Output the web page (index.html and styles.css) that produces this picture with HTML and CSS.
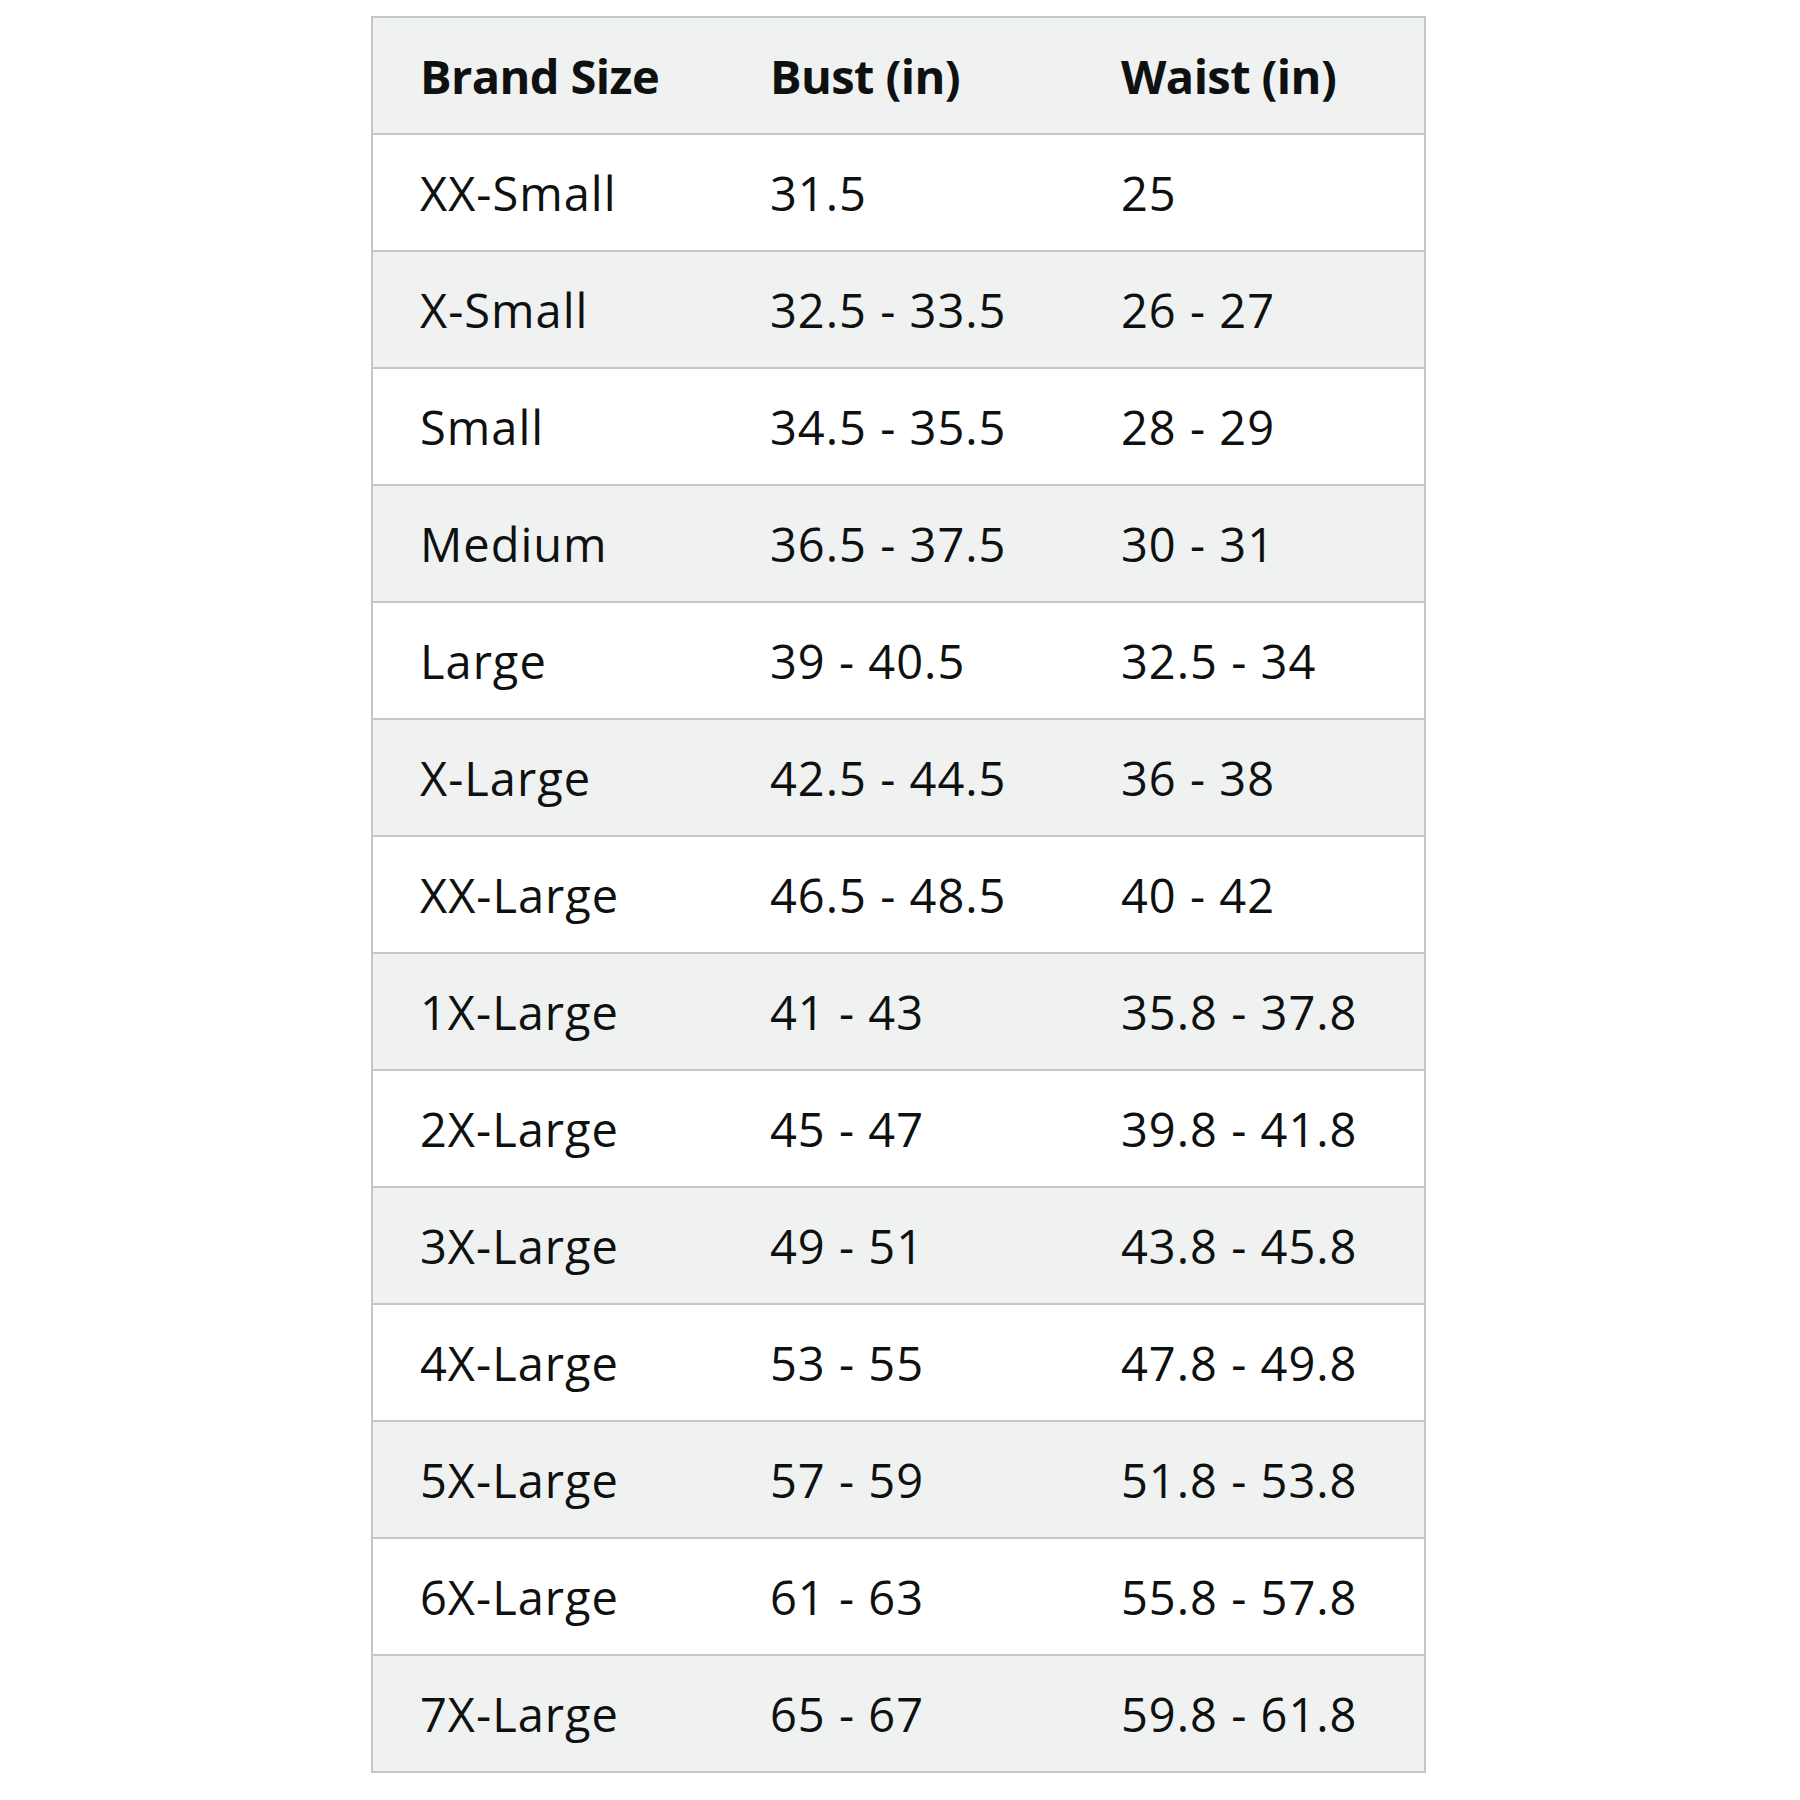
FILE: index.html
```html
<!DOCTYPE html>
<html>
<head>
<meta charset="utf-8">
<link rel="stylesheet" href="styles.css">
</head>
<body>
<div class="page">
<table class="chart">
<thead>
<tr><th>Brand Size</th><th>Bust (in)</th><th>Waist (in)</th></tr>
</thead>
<tbody>
<tr><td>XX-Small</td><td>31.5</td><td>25</td></tr>
<tr><td>X-Small</td><td>32.5 - 33.5</td><td>26 - 27</td></tr>
<tr><td>Small</td><td>34.5 - 35.5</td><td>28 - 29</td></tr>
<tr><td>Medium</td><td>36.5 - 37.5</td><td>30 - 31</td></tr>
<tr><td>Large</td><td>39 - 40.5</td><td>32.5 - 34</td></tr>
<tr><td>X-Large</td><td>42.5 - 44.5</td><td>36 - 38</td></tr>
<tr><td>XX-Large</td><td>46.5 - 48.5</td><td>40 - 42</td></tr>
<tr><td>1X-Large</td><td>41 - 43</td><td>35.8 - 37.8</td></tr>
<tr><td>2X-Large</td><td>45 - 47</td><td>39.8 - 41.8</td></tr>
<tr><td>3X-Large</td><td>49 - 51</td><td>43.8 - 45.8</td></tr>
<tr><td>4X-Large</td><td>53 - 55</td><td>47.8 - 49.8</td></tr>
<tr><td>5X-Large</td><td>57 - 59</td><td>51.8 - 53.8</td></tr>
<tr><td>6X-Large</td><td>61 - 63</td><td>55.8 - 57.8</td></tr>
<tr><td>7X-Large</td><td>65 - 67</td><td>59.8 - 61.8</td></tr>
</tbody>
</table>
</div>
</body>
</html>
```
FILE: styles.css
```css
html, body {
  margin: 0;
  padding: 0;
  background: #ffffff;
}
.page {
  padding-top: 16px;
  padding-left: 371px;
}
.chart {
  border-collapse: collapse;
  width: 1055px;
  table-layout: fixed;
  font-family: "Open Sans", "Noto Sans", sans-serif;
  font-size: 47px;
  color: #0f1111;
  border: 2px solid #c4c7c7;
}
.chart th,
.chart td {
  height: 115px;
  padding: 0 0 0 47px;
  text-align: left;
  border-top: 2px solid #c4c7c7;
  border-bottom: 2px solid #c4c7c7;
  vertical-align: middle;
  white-space: nowrap;
}
.chart th {
  font-weight: 700;
  letter-spacing: -0.6px;
  background: #f0f2f2;
}
.chart td {
  font-weight: 400;
  letter-spacing: 1px;
}
.chart tbody tr:nth-child(even) td {
  background: #f0f2f2;
}
.chart tbody tr:nth-child(odd) td {
  background: #ffffff;
}
```
